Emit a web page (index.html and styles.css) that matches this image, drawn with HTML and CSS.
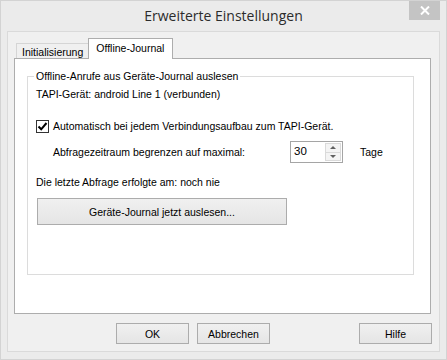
FILE: index.html
```html
<!DOCTYPE html>
<html lang="de">
<head>
    <meta charset="UTF-8">
    <meta name="viewport" content="width=device-width, initial-scale=1.0">
    <title>Erweiterte Einstellungen</title>
    <link rel="stylesheet" href="styles.css">
</head>
<body>
    <div class="window">
        <div class="titlebar">
            <span></span>
            <span class="title">Erweiterte Einstellungen</span>
            <span class="close">
                <svg width="10" height="9" viewBox="0 0 10 9"><path d="M1 0.5 L9 8.5 M9 0.5 L1 8.5" stroke="#fff" stroke-width="2"/></svg>
            </span>
        </div>

        <div class="client">
            <div class="tabs">
                <div class="tab">Initialisierung</div>
                <div class="tab active">Offline-Journal</div>
            </div>

            <div class="panel">
                <fieldset class="group">
                    <legend>Offline-Anrufe aus Geräte-Journal auslesen</legend>
                    <p class="line device">TAPI-Gerät: android Line 1 (verbunden)</p>

                    <label class="check">
                        <span class="box">
                            <svg width="11" height="11" viewBox="0 0 11 11"><path d="M1.5 5.5 L4.2 8.3 L9.5 2" fill="none" stroke="#000" stroke-width="2"/></svg>
                        </span>
                        Automatisch bei jedem Verbindungsaufbau zum TAPI-Gerät.
                    </label>

                    <div class="limit">
                        <span class="limit-label">Abfragezeitraum begrenzen auf maximal:</span>
                        <span class="spin">
                            <span class="spin-value">30</span>
                            <span class="spin-buttons">
                                <span class="spin-btn up"></span>
                                <span class="spin-btn down"></span>
                            </span>
                        </span>
                        <span class="unit">Tage</span>
                    </div>

                    <p class="line last">Die letzte Abfrage erfolgte am: noch nie</p>

                    <button class="btn wide">Geräte-Journal jetzt auslesen...</button>
                </fieldset>
            </div>

            <div class="actions">
                <button class="btn">OK</button>
                <button class="btn">Abbrechen</button>
                <button class="btn help">Hilfe</button>
            </div>
        </div>
    </div>
</body>
</html>
```

FILE: styles.css
```css
body {
    margin: 0;
    font-family: "Liberation Sans", Arial, sans-serif;
    font-size: 10.5px;
    color: #000;
}
.window {
    width: 447px;
    height: 360px;
    box-sizing: border-box;
    border: 1px solid #d3d3d3;
    background: #ebebeb;
    display: flex;
    flex-direction: column;
}
.titlebar {
    height: 30px;
    display: grid;
    grid-template-columns: 1fr auto 1fr;
    align-items: start;
}
.title {
    font-family: "Open Sans", "Noto Sans", sans-serif;
    font-size: 14px;
    line-height: 30px;
    color: #2b2b2b;
}
.close {
    justify-self: end;
    width: 31px;
    height: 19px;
    margin-right: 6px;
    background: #c4c4c4;
    display: flex;
    align-items: center;
    justify-content: center;
}
.client {
    flex: 1;
    margin: 0 6px 7px 6px;
    border: 1px solid #dadada;
    background: #f0f0f0;
    padding: 6px 8px 0 6px;
}
.tabs {
    display: flex;
    align-items: flex-end;
    height: 21px;
    padding-left: 2px;
    margin-bottom: -1px;
    position: relative;
}
.tab {
    height: 15px;
    line-height: 15px;
    box-sizing: border-box;
    padding: 1px 5px 0 5px;
    border: 1px solid #d5d5d5;
    border-bottom: none;
    background: #f0f0f0;
    margin-bottom: 1px;
}
.tab.active {
    height: 21px;
    line-height: 13px;
    padding: 3px 8px 0 7px;
    border-color: #adadad;
    background: #fff;
    margin-bottom: 0;
    margin-left: -1px;
}
.panel {
    height: 256px;
    box-sizing: border-box;
    background: #fff;
    border: 1px solid #adadad;
    padding: 11px 16px 0 12px;
}
.group {
    height: 205px;
    box-sizing: border-box;
    margin: 0;
    border: 1px solid #dcdcdc;
    padding: 0 8px;
}
.group legend {
    padding: 0 2px;
    margin-left: -2px;
    line-height: 13px;
}
.line {
    margin: 0;
    line-height: 13px;
}
.device {
    margin-top: 5px;
}
.check {
    display: flex;
    align-items: center;
    gap: 4px;
    margin-top: 19px;
    line-height: 13px;
}
.box {
    width: 13px;
    height: 13px;
    box-sizing: border-box;
    border: 1px solid #333;
    background: #fff;
    display: flex;
    align-items: center;
    justify-content: center;
}
.limit {
    display: flex;
    align-items: center;
    margin-top: 8px;
    padding-left: 17px;
}
.limit-label {
    width: 237px;
}
.spin {
    width: 53px;
    height: 22px;
    box-sizing: border-box;
    border: 1px solid #a5a5a5;
    background: #fff;
    display: flex;
    justify-content: space-between;
}
.spin-value {
    padding: 3px 0 0 3px;
    font-size: 11.5px;
}
.spin-buttons {
    width: 16px;
    display: flex;
    flex-direction: column;
    padding: 1px 1px 1px 0;
}
.spin-btn {
    flex: 1;
    border: 1px solid #dadada;
    background: #f4f4f4;
    display: flex;
    align-items: center;
    justify-content: center;
}
.spin-btn.up {
    border-bottom: none;
}
.spin-btn.up::after {
    content: "";
    border-left: 3px solid transparent;
    border-right: 3px solid transparent;
    border-bottom: 3px solid #606060;
}
.spin-btn.down::after {
    content: "";
    border-left: 3px solid transparent;
    border-right: 3px solid transparent;
    border-top: 3px solid #606060;
}
.unit {
    margin-left: 17px;
}
.last {
    margin-top: 13px;
}
.btn {
    font-family: "Liberation Sans", Arial, sans-serif;
    font-size: 10.5px;
    color: #000;
    background: linear-gradient(#f0f0f0, #e5e5e5);
    border: 1px solid #acacac;
    padding: 0;
    width: 73px;
    height: 21px;
}
.wide {
    display: block;
    width: 250px;
    height: 27px;
    margin: 9px 0 0 1px;
}
.actions {
    display: flex;
    gap: 8px;
    justify-content: flex-end;
    margin-top: 9px;
    margin-right: -1px;
}
.help {
    margin-left: 81px;
}
```
